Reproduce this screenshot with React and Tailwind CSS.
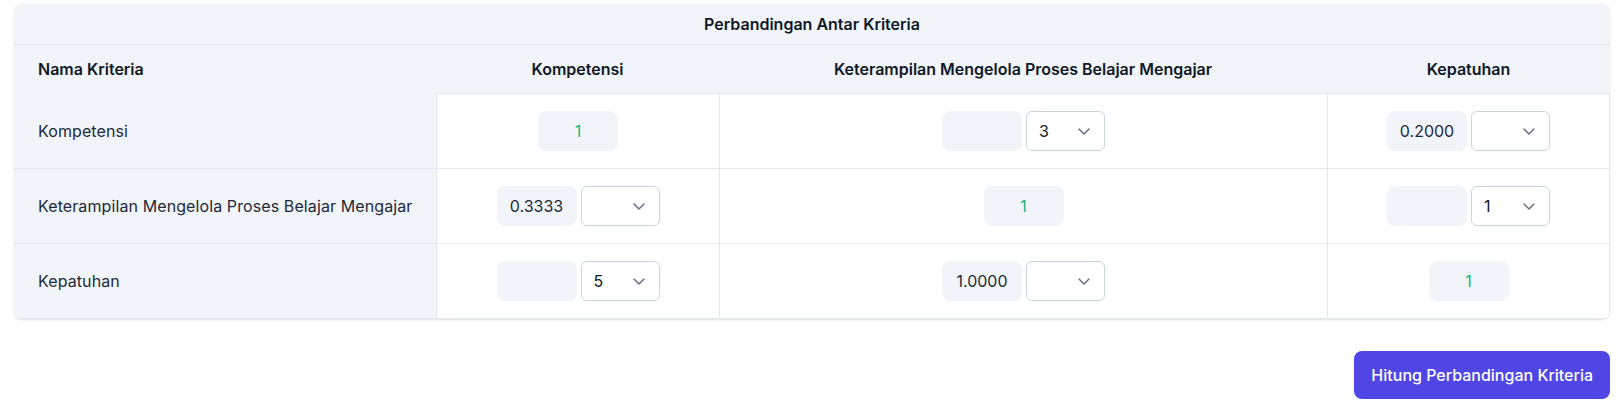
import React from "react";

const criteria = [
  "Kompetensi",
  "Keterampilan Mengelola Proses Belajar Mengajar",
  "Kepatuhan",
];

// each cell: diag | { value, pick }
const matrix = [
  [{ diag: true }, { value: "", pick: "3" }, { value: "0.2000", pick: "" }],
  [{ value: "0.3333", pick: "" }, { diag: true }, { value: "", pick: "1" }],
  [{ value: "", pick: "5" }, { value: "1.0000", pick: "" }, { diag: true }],
];

const Chevron = () => (
  <svg width="12" height="7" viewBox="0 0 12 7" fill="none" className="text-gray-500">
    <path d="M1 1l5 5 5-5" stroke="currentColor" strokeWidth="1.5" strokeLinecap="round" strokeLinejoin="round" />
  </svg>
);

const ValueBox = ({ children, green }) => (
  <div
    className={`w-[80px] h-10 rounded-lg bg-slate-100 flex items-center justify-center text-base ${
      green ? "text-[#10b981]" : "text-gray-800"
    }`}
  >
    {children}
  </div>
);

const Select = ({ value }) => (
  <div className="w-[79px] h-10 rounded-md border border-slate-300 bg-white flex items-center justify-between pl-3 pr-[14px] text-base text-gray-900">
    <span>{value}</span>
    <Chevron />
  </div>
);

export default function App() {
  const last = criteria.length - 1;
  return (
    <div className="min-h-screen bg-white font-['Inter',sans-serif] text-gray-800">
      <div className="ml-[14px] mt-1 w-[1596px] rounded-lg bg-slate-100 shadow-sm overflow-hidden">
        <div className="h-[41px] border-b border-slate-200 flex items-center justify-center text-base font-semibold text-gray-900">
          Perbandingan Antar Kriteria
        </div>
        <div className="grid grid-cols-[422px_283px_608px_283px]">
          <div className="h-12 flex items-center px-6 font-semibold text-gray-900">Nama Kriteria</div>
          {criteria.map((c) => (
            <div key={c} className="h-12 flex items-center justify-center font-semibold text-gray-900">
              {c}
            </div>
          ))}
          {criteria.map((name, r) => (
            <React.Fragment key={name}>
              <div
                className={`flex items-center pl-6 whitespace-nowrap text-base tracking-[0.1px] text-gray-800 border-slate-200 ${
                  r > 0 ? "border-t" : ""
                } ${r === last ? "border-b h-[76px]" : "h-[75px]"}`}
              >
                {name}
              </div>
              {matrix[r].map((cell, c) => (
                <div
                  key={c}
                  className={`bg-white border-l border-t border-slate-200 flex items-center justify-center gap-1 ${
                    c === 2 ? "border-r" : ""
                  } ${r === last ? "border-b h-[76px]" : "h-[75px]"}`}
                >
                  {cell.diag ? (
                    <ValueBox green>1</ValueBox>
                  ) : (
                    <>
                      <ValueBox>{cell.value}</ValueBox>
                      <Select value={cell.pick} />
                    </>
                  )}
                </div>
              ))}
            </React.Fragment>
          ))}
        </div>
      </div>
      <div className="ml-[14px] w-[1596px] mt-8 flex justify-end">
        <button className="h-12 px-[17px] rounded-lg bg-[#4f46e5] text-white text-base font-medium">
          Hitung Perbandingan Kriteria
        </button>
      </div>
    </div>
  );
}
